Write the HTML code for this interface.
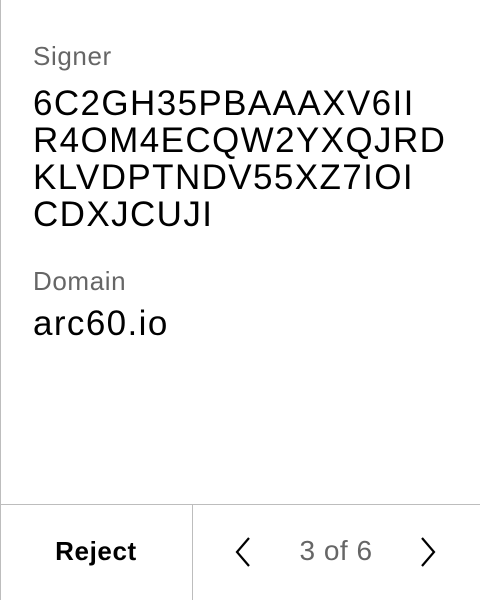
<!DOCTYPE html>
<html><head><style>
html,body{margin:0;padding:0;background:#fff;}
body{width:480px;height:600px;position:relative;overflow:hidden;font-family:"Liberation Sans",sans-serif;}
.lb{position:absolute;left:0;top:0;width:1px;height:600px;background:#bdbdbd;}
.t{position:absolute;left:33px;white-space:nowrap;}
.lab{font-size:26px;color:#666;letter-spacing:0.6px;}
.val{font-size:35px;color:#000;line-height:37px;letter-spacing:1.4px;}
.hr{position:absolute;left:0;top:504px;width:480px;height:1px;background:#bdbdbd;}
.vr{position:absolute;left:192px;top:504px;width:1px;height:96px;background:#bdbdbd;}
</style></head><body>
<div class="lb"></div>
<div class="t lab" style="top:41px">Signer</div>
<div class="t val" style="top:85px">6C2GH35PBAAAXV6II<br>R4OM4ECQW2YXQJRD<br>KLVDPTNDV55XZ7IOI<br>CDXJCUJI</div>
<div class="t lab" style="top:266px">Domain</div>
<div class="t val" style="top:305px">arc60.io</div>
<div class="hr"></div><div class="vr"></div>
<div style="position:absolute;left:0;top:503px;width:192px;height:96px;line-height:96px;text-align:center;font-size:26px;font-weight:bold;letter-spacing:0.6px;">Reject</div>
<svg style="position:absolute;left:230px;top:536px" width="24" height="32"><path d="M19 2 L7 16 L19 30" fill="none" stroke="#000" stroke-width="2.2"/></svg>
<div style="position:absolute;left:192px;top:503px;width:288px;height:96px;line-height:96px;text-align:center;font-size:28px;color:#666;letter-spacing:0.5px;">3 of 6</div>
<svg style="position:absolute;left:417px;top:536px" width="24" height="32"><path d="M5 2 L17 16 L5 30" fill="none" stroke="#000" stroke-width="2.2"/></svg>
</body></html>
